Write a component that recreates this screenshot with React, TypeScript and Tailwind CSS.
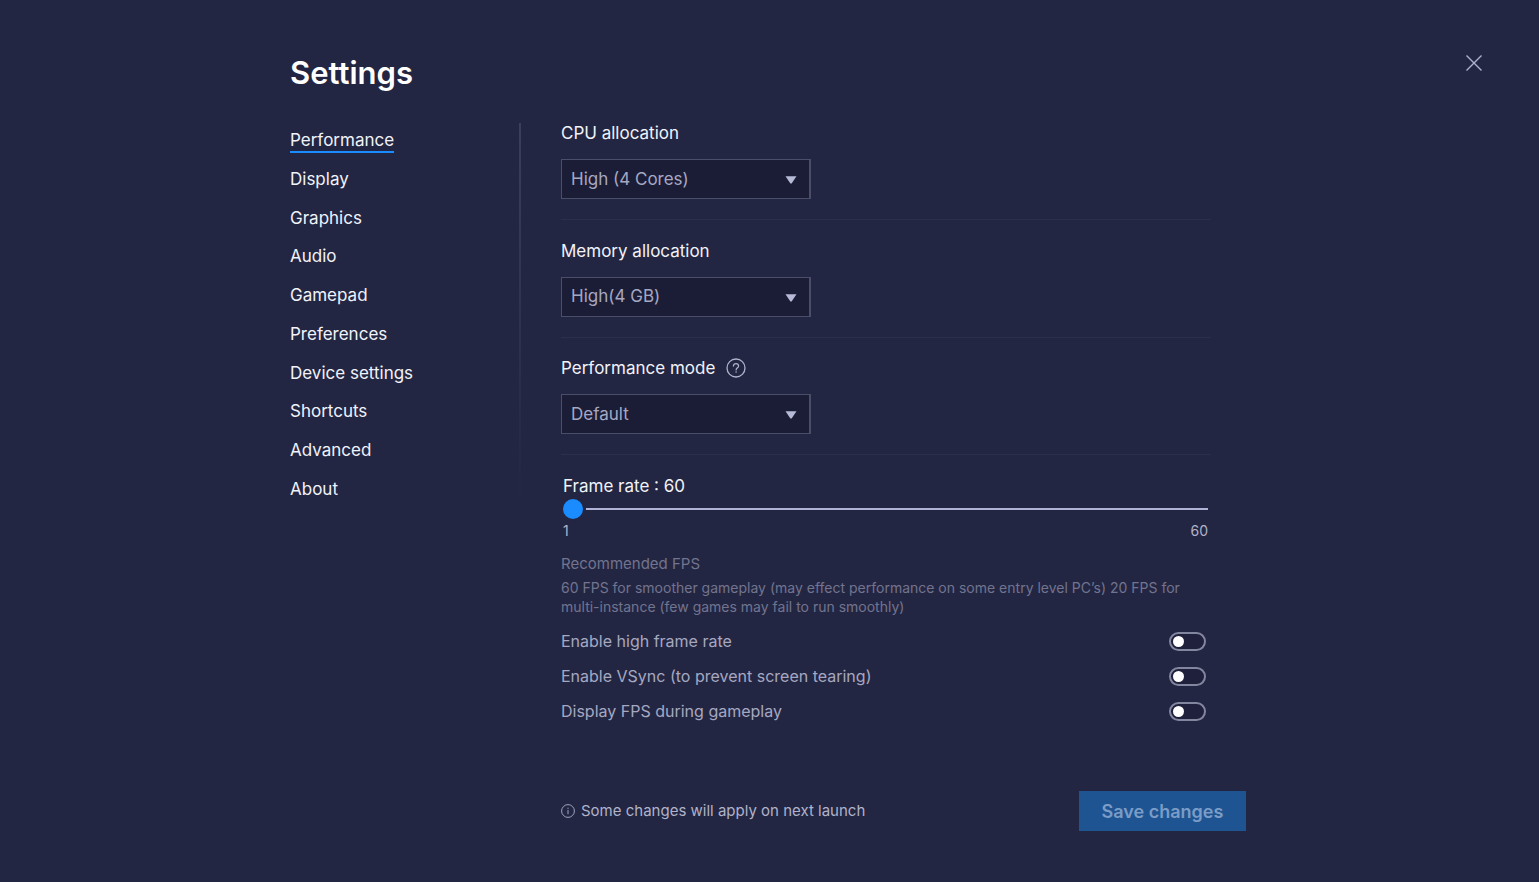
import { useState } from 'react';
import type { ReactNode } from 'react';

const navItems = [
  'Performance',
  'Display',
  'Graphics',
  'Audio',
  'Gamepad',
  'Preferences',
  'Device settings',
  'Shortcuts',
  'Advanced',
  'About',
];

type SelectFieldProps = {
  id: string;
  label: string;
  options: string[];
  hint?: ReactNode;
};

const SelectField = ({ id, label, options, hint }: SelectFieldProps) => (
  <div className="border-b border-[#2c2f4b] pb-5">
    <div className="flex items-center gap-[11px] h-5 mb-4">
      <label htmlFor={id} className="text-[17px] leading-5">
        {label}
      </label>
      {hint}
    </div>
    <div className="relative w-[250px] max-w-full">
      <select
        id={id}
        className="block appearance-none w-full h-10 pt-px pl-[9px] pr-10 bg-[#1b1d37] border border-r-2 border-[#4b4e69] text-[17px] text-[#a6a8c1]"
      >
        {options.map((option) => (
          <option key={option}>{option}</option>
        ))}
      </select>
      <svg
        className="absolute right-3.5 top-[17px] pointer-events-none"
        width="12"
        height="8"
        viewBox="0 0 12 8"
        fill="#b7bad6"
      >
        <path d="M.5.3h11L6.6 7.5H5.4z" />
      </svg>
    </div>
  </div>
);

const Toggle = ({ id, label }: { id: string; label: string }) => {
  const [checked, setChecked] = useState(false);

  return (
    <div className="flex items-center justify-between h-[35px] pr-[5px]">
      <label htmlFor={id} className="text-[16px] pb-0.5 text-[#a6a8c1]">
        {label}
      </label>
      <input
        id={id}
        type="checkbox"
        role="switch"
        checked={checked}
        onChange={() => setChecked(!checked)}
        className="appearance-none flex items-center w-[37px] h-[19px] px-0.5 rounded-full border-2 border-[#83869f] bg-[#1f213c] before:block before:size-[11px] before:rounded-full before:bg-white checked:justify-end checked:bg-[#1a8cff]"
      />
    </div>
  );
};

const HelpIcon = () => (
  <svg width="20" height="20" viewBox="0 0 20 20" fill="none" stroke="#b0b3ca">
    <circle cx="10" cy="10" r="9" strokeWidth="1.3" />
    <path
      d="M7.4 8.1c0-1.5 1.1-2.5 2.6-2.5s2.6 1 2.6 2.3c0 1.800-2.500 1.900-2.500 4"
      strokeWidth="1.2"
      strokeLinecap="round"
    />
    <circle cx="10.1" cy="14" r=".8" fill="#b0b3ca" stroke="none" />
  </svg>
);

const InfoIcon = () => (
  <svg width="14" height="14" viewBox="0 0 14 14" fill="none" stroke="#a0a3bb">
    <circle cx="7" cy="7" r="6.4" />
    <path d="M7 6v4.200M7 3.700v1.200" />
  </svg>
);

const App = () => {
  const [active, setActive] = useState('Performance');

  return (
    <div className="min-h-screen grid grid-cols-[1fr_minmax(0,959px)_1fr] bg-[#232642] text-[#f1f2fa] font-['Inter','Open_Sans',sans-serif]">
      <div className="col-start-2 pt-[53px] pb-10">
        <h1 className="text-[31px] leading-10 font-semibold text-white">
          Settings
        </h1>

        <div className="flex mt-[30px]">
          <nav className="w-[229px] h-[370px] shrink-0 flex flex-col items-start justify-between mt-[7px]">
            {navItems.map((item) => (
              <a
                key={item}
                href="#"
                onClick={() => setActive(item)}
                className={
                  item === active
                    ? 'text-[17px] leading-[21px] shadow-[0_2px_0_#1a8cff]'
                    : 'text-[17px] leading-[21px]'
                }
              >
                {item}
              </a>
            ))}
          </nav>
          <div className="w-0.5 h-[380px] shrink-0 bg-linear-to-b from-[#3c3f5a] to-[#232642]" />

          <main className="flex-1 min-w-0 pl-10">
            <div className="max-w-[650px]">
              <div className="flex flex-col justify-between min-h-[332px]">
                <SelectField
                  id="cpu"
                  label="CPU allocation"
                  options={['High (4 Cores)', 'Medium (2 Cores)', 'Low (1 Core)']}
                />
                <SelectField
                  id="memory"
                  label="Memory allocation"
                  options={['High(4 GB)', 'Medium(2 GB)', 'Low(1 GB)']}
                />
                <SelectField
                  id="mode"
                  label="Performance mode"
                  options={['Default', 'High performance', 'Low memory']}
                  hint={
                    <button type="button" aria-label="About performance mode">
                      <HelpIcon />
                    </button>
                  }
                />
              </div>

              <div className="mt-[21px] pl-0.5 pr-[3px]">
                <label htmlFor="fps" className="block text-[17px] leading-5">
                  Frame rate : 60
                </label>
                <input
                  id="fps"
                  type="range"
                  min={1}
                  max={60}
                  defaultValue={1}
                  className="block appearance-none w-full h-5 mt-[3px] bg-transparent [&::-webkit-slider-runnable-track]:h-0.5 [&::-webkit-slider-runnable-track]:bg-[#b0b3d6] [&::-webkit-slider-thumb]:appearance-none [&::-webkit-slider-thumb]:size-5 [&::-webkit-slider-thumb]:-mt-[9px] [&::-webkit-slider-thumb]:rounded-full [&::-webkit-slider-thumb]:bg-[#1a8cff] [&::-webkit-slider-thumb]:shadow-[0_0_0_3px_#232642]"
                />
                <div className="flex justify-between text-[14px] leading-5 mt-0.5 text-[#b0b3ca]">
                  <span>1</span>
                  <span>60</span>
                </div>
              </div>

              <div className="mt-[13px] leading-[19px] text-[#72748f]">
                <h2 className="text-[15px]">Recommended FPS</h2>
                <p className="mt-[5px] text-[14px]">
                  60 FPS for smoother gameplay (may effect performance on some
                  entry level PC’s) 20 FPS for multi-instance (few games may
                  fail to run smoothly)
                </p>
              </div>

              <div className="mt-2">
                <Toggle id="high-fps" label="Enable high frame rate" />
                <Toggle
                  id="vsync"
                  label="Enable VSync (to prevent screen tearing)"
                />
                <Toggle id="show-fps" label="Display FPS during gameplay" />
              </div>
            </div>

            <footer className="max-w-[685px] flex items-center justify-between mt-[62px]">
              <p className="flex items-center gap-1.5 text-[15px] text-[#b0b3ca]">
                <InfoIcon />
                Some changes will apply on next launch
              </p>
              <button
                type="button"
                disabled
                className="w-[167px] h-10 bg-[#1f5493] text-[#7a9cc6] text-[18px] font-semibold"
              >
                Save changes
              </button>
            </footer>
          </main>
        </div>
      </div>

      <div className="col-start-3 flex justify-end items-start pt-[55px] pr-[57px]">
        <button type="button" aria-label="Close">
          <svg
            width="16"
            height="16"
            viewBox="0 0 16 16"
            stroke="#b0b3d0"
            strokeWidth="1.4"
          >
            <path d="M.5.5l15 15M15.500.5l-15 15" />
          </svg>
        </button>
      </div>
    </div>
  );
};

export default App;
